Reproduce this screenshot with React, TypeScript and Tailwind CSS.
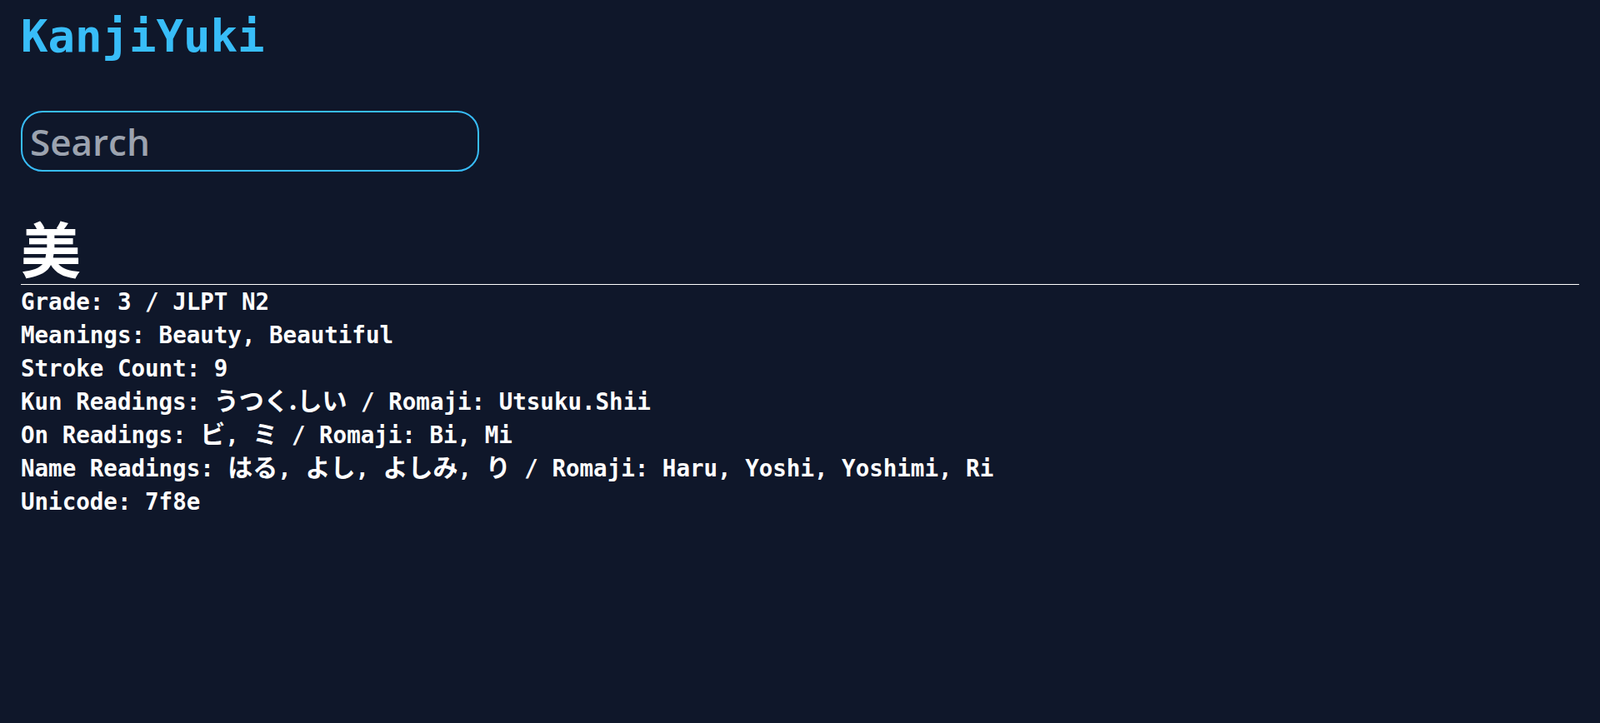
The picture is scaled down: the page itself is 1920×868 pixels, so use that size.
import { useState } from "react";

type Kanji = {
  kanji: string;
  grade: number;
  jlpt: number;
  meanings: string[];
  strokes: number;
  kun: string[];
  kunRomaji: string[];
  on: string[];
  onRomaji: string[];
  name: string[];
  nameRomaji: string[];
  unicode: string;
};

const bi: Kanji = {
  kanji: "美",
  grade: 3,
  jlpt: 2,
  meanings: ["Beauty", "Beautiful"],
  strokes: 9,
  kun: ["うつく.しい"],
  kunRomaji: ["Utsuku.Shii"],
  on: ["ビ", "ミ"],
  onRomaji: ["Bi", "Mi"],
  name: ["はる", "よし", "よしみ", "り"],
  nameRomaji: ["Haru", "Yoshi", "Yoshimi", "Ri"],
  unicode: "7f8e",
};

function Kana({ items }: { items: string[] }) {
  return (
    <>
      {items.map((k, i) => (
        <span key={k}>
          <span className="text-[30px] leading-none font-['Noto_Sans_CJK_JP',sans-serif]">{k}</span>
          {i < items.length - 1 && ", "}
        </span>
      ))}
    </>
  );
}

export default function App() {
  const [query, setQuery] = useState("");
  const k = bi;

  return (
    <div className="min-h-screen bg-[#0f172a] px-[25px] font-['DejaVu_Sans_Mono','Noto_Sans_CJK_JP',monospace] text-white">
      <h1 className="pt-[17px] text-[54px] leading-[54px] font-bold text-[#38bdf8]">KanjiYuki</h1>

      <input
        value={query}
        onChange={(e) => setQuery(e.target.value)}
        placeholder="Search"
        className="mt-[62px] block h-[73px] w-[550px] rounded-[26px] border-2 border-[#38bdf8] bg-transparent pl-[9px] font-['Open_Sans',sans-serif] text-[44px] font-semibold text-white outline-none placeholder:text-[#9ca3af]"
      />

      <div className="mt-[54px]">
        <h2 className="border-b border-white pb-[9px] font-['Noto_Sans_CJK_JP',sans-serif] text-[72px] leading-[72px] font-bold">
          {k.kanji}
        </h2>
        <div className="text-[27.5px] leading-[40px] font-bold">
          <div>Grade: {k.grade} / JLPT N{k.jlpt}</div>
          <div>Meanings: {k.meanings.join(", ")}</div>
          <div>Stroke Count: {k.strokes}</div>
          <div>
            Kun Readings: <Kana items={k.kun} /> / Romaji: {k.kunRomaji.join(", ")}
          </div>
          <div>
            On Readings: <Kana items={k.on} /> / Romaji: {k.onRomaji.join(", ")}
          </div>
          <div>
            Name Readings: <Kana items={k.name} /> / Romaji: {k.nameRomaji.join(", ")}
          </div>
          <div>Unicode: {k.unicode}</div>
        </div>
      </div>
    </div>
  );
}
